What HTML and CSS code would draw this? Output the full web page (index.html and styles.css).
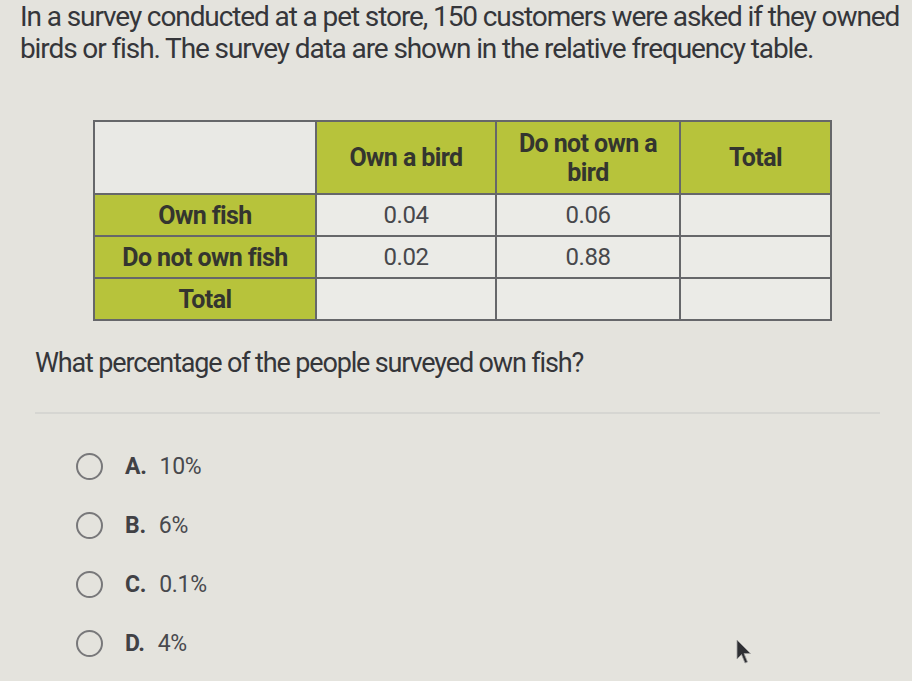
FILE: index.html
```html
<!DOCTYPE html>
<html>
<head>
<meta charset="utf-8">
<link rel="stylesheet" href="styles.css">
</head>
<body>
<main class="page">
  <p class="prompt">In a survey conducted at a pet store, 150 customers were asked if they owned birds or fish. The survey data are shown in the relative frequency table.</p>
  <div class="table-wrap">
    <table class="freq">
      <colgroup>
        <col class="c1"><col class="c2"><col class="c3"><col class="c4">
      </colgroup>
      <tr class="head">
        <th class="blank"></th>
        <th>Own a bird</th>
        <th>Do not own a bird</th>
        <th>Total</th>
      </tr>
      <tr>
        <th>Own fish</th>
        <td>0.04</td>
        <td>0.06</td>
        <td></td>
      </tr>
      <tr>
        <th>Do not own fish</th>
        <td>0.02</td>
        <td>0.88</td>
        <td></td>
      </tr>
      <tr>
        <th>Total</th>
        <td></td>
        <td></td>
        <td></td>
      </tr>
    </table>
  </div>
  <p class="question">What percentage of the people surveyed own fish?</p>
  <hr class="divider">
  <ul class="options">
    <li><span class="radio"></span><b>A.</b><span>10%</span></li>
    <li><span class="radio"></span><b>B.</b><span>6%</span></li>
    <li><span class="radio"></span><b>C.</b><span>0.1%</span></li>
    <li><span class="radio"></span><b>D.</b><span>4%</span></li>
  </ul>
</main>
<svg class="cursor" width="17" height="26" viewBox="0 0 17 26"><path d="M1 1 L1 20 L5.5 15.5 L9 24 L11.5 23 L8 14.5 L14.5 14.5 Z" fill="#2e2f33" stroke="#a0a0a0" stroke-width="0.8"/></svg>
</body>
</html>
```
FILE: styles.css
```css
html, body {
  margin: 0;
  padding: 0;
}
body {
  width: 912px;
  height: 681px;
  overflow: hidden;
  background: #e4e3dd;
  font-family: Roboto, "Liberation Sans", sans-serif;
  color: #35363a;
  position: relative;
}
.page {
  padding: 1px 0 0 20px;
}
.prompt {
  margin: 0;
  font-size: 28px;
  line-height: 32px;
  letter-spacing: -1.1px;
  width: 888px;
}
.table-wrap {
  padding: 55px 0 0 73px;
}
.freq {
  border-collapse: collapse;
  width: 737px;
  table-layout: fixed;
}
.freq .c1 { width: 222px; }
.freq .c2 { width: 180px; }
.freq .c3 { width: 184px; }
.freq .c4 { width: 151px; }
.freq th, .freq td {
  border: 2px solid #66676a;
  text-align: center;
  padding: 0;
}
.freq th {
  background: #b7c33b;
  font-weight: 700;
  font-size: 25px;
  letter-spacing: -0.6px;
  color: #34352f;
  line-height: 29px;
}
.freq td {
  background: #ebebe7;
  font-size: 24px;
  letter-spacing: -0.5px;
  color: #47484c;
}
.freq .head th { height: 71px; padding: 0 14px; }
.freq .head th.blank { background: #e9e9e5; }
.freq tr:not(.head) th, .freq tr:not(.head) td { height: 40px; }
.question {
  margin: 27px 0 0 15px;
  font-size: 27px;
  letter-spacing: -1.15px;
  line-height: 30px;
}
.divider {
  margin: 34px 32px 0 15px;
  border: 0;
  border-top: 2px solid #d6d6d2;
}
.options {
  list-style: none;
  margin: 38px 0 0 56px;
  padding: 0;
}
.options li {
  display: flex;
  align-items: center;
  gap: 13px;
  height: 28px;
  margin-bottom: 31px;
  font-size: 23px;
  letter-spacing: -0.3px;
  color: #48494d;
}
.options li b {
  font-weight: 700;
  color: #414145;
  margin-left: 9px;
}
.radio {
  width: 27px;
  height: 27px;
  border: 2.5px solid #78787a;
  border-radius: 50%;
  box-sizing: border-box;
}
.cursor {
  position: absolute;
  left: 736px;
  top: 639px;
}
```
